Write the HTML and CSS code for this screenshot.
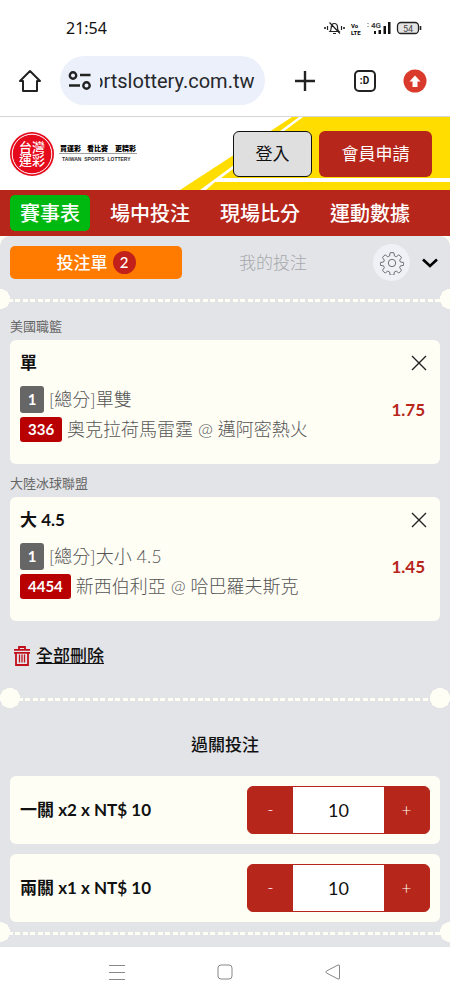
FILE: index.html
```html
<!DOCTYPE html>
<html lang="zh-Hant">
<head>
<meta charset="utf-8">
<meta name="viewport" content="width=device-width, initial-scale=1">
<title>台灣運彩 投注單</title>
<link rel="stylesheet" href="styles.css">
</head>
<body>
<div class="status-bar">
  <span class="clock">21:54</span>
  <svg class="status-icons" width="100" height="16" viewBox="0 0 100 16" aria-hidden="true">
    <g fill="none" stroke="#222" stroke-width="1.2">
      <path d="M8 11.5c1-1 1.2-2 1.2-4 0-2.500 1.300-4 3.100-4s3.200 1.500 3.200 4c0 2 .4 3 1.500 4zM11 13.500h3M7.500 2.500l10.500 11"/>
      <path d="M5.500 6v4M19.500 6v4"/>
      <path d="M3 7v2M22 7v2" stroke-width="1.600"/>
    </g>
    <text class="volte" x="29" y="8">Vo</text>
    <text class="volte" x="29" y="15">LTE</text>
    <path d="M46 3v1M46 6v1" stroke="#999" stroke-width="1.500"/>
    <text class="network" x="49" y="8">4G</text>
    <g fill="#111">
      <rect x="52" y="11" width="2" height="3"/><rect x="56.500" y="10" width="2.500" height="4"/>
      <rect x="61.500" y="6" width="2.500" height="8"/><rect x="66" y="2" width="2.500" height="12"/>
    </g>
    <rect x="75.500" y="2.500" width="21" height="11" rx="3.500" fill="#e4e4e4" stroke="#222" stroke-width="1.300"/>
    <path d="M98.500 6v4" stroke="#222" stroke-width="1.600"/>
    <text class="battery" x="86" y="11.500" text-anchor="middle">54</text>
  </svg>
</div>

<div class="browser-bar">
  <button class="icon-button" type="button" aria-label="首頁">
    <svg width="24" height="24" viewBox="0 0 24 24" fill="none" stroke="#222" stroke-width="2" stroke-linejoin="round"><path d="M12 2 2 12h3v10h14V12h3z"/></svg>
  </button>
  <button class="address" type="button">
    <svg width="24" height="24" viewBox="0 0 24 24" fill="none" stroke="#222" stroke-width="2.400"><circle cx="5" cy="6.500" r="3.200"/><path d="M12 6h10.500M1 16.500h11"/><circle cx="18.500" cy="16.500" r="3.200"/></svg>
    <span class="address-text">sportslottery.com.tw</span>
  </button>
  <button class="icon-button" type="button" aria-label="新分頁">
    <svg width="22" height="22" viewBox="0 0 22 22" stroke="#222" stroke-width="2.400"><path d="M11 1v20M1 11h20"/></svg>
  </button>
  <button class="tab-count" type="button">:D</button>
  <button class="icon-button" type="button" aria-label="更新">
    <svg width="24" height="24" viewBox="0 0 24 24"><circle cx="12" cy="12" r="11.500" fill="#d93a2b"/><path d="M12 6.500 6.500 12.500h3V18h5v-5.500h3z" fill="#fff"/></svg>
  </button>
</div>

<header class="site-header">
  <svg class="header-art" viewBox="0 0 270 73" preserveAspectRatio="xMaxYMax meet" aria-hidden="true">
    <path d="M112 0H270V73H0z" fill="#ffdd00"/>
    <path d="M119 0h4L41 61H270v4H35l-9 8h-6z" fill="#fff"/>
  </svg>
  <a class="brand" href="#" aria-label="台灣運彩">
    <svg width="128" height="44" viewBox="0 0 128 44">
      <circle cx="22" cy="22" r="22" fill="#e60b1c"/>
      <circle cx="22" cy="22" r="19.800" fill="none" stroke="#fff" stroke-width="1"/>
      <text class="seal" x="9" y="20">台灣</text>
      <text class="seal" x="9" y="33">運彩</text>
      <text class="slogan" x="50" y="19">買運彩</text>
      <text class="slogan" x="77" y="19">看比賽</text>
      <text class="slogan" x="105" y="19">更精彩</text>
      <path d="M49 21.500h78" stroke="#777" stroke-width=".7"/>
      <text class="tagline" x="52" y="29">TAIWAN  SPORTS  LOTTERY</text>
    </svg>
  </a>
  <div class="account">
    <button class="login" type="button">登入</button>
    <button class="signup" type="button">會員申請</button>
  </div>
</header>

<nav class="main-nav">
  <a class="active" href="#">賽事表</a>
  <a href="#">場中投注</a>
  <a href="#">現場比分</a>
  <a href="#">運動數據</a>
</nav>

<main class="betslip-wrap">
  <div class="betslip">
    <div class="slip-tabs">
      <button class="slip-tab selected" type="button">投注單 <span class="count">2</span></button>
      <button class="slip-tab" type="button">我的投注</button>
      <button class="settings" type="button" aria-label="設定">
        <svg width="24" height="24" viewBox="0 0 26 26" fill="none" stroke="#666" stroke-width="1" stroke-linejoin="round"><circle cx="13" cy="13" r="4"/><path d="M10.900 2q2.100-.7 4.200 0l.5 3.300 2 .9 2.700-2q2 1 3 3l-2 2.700.8 2 3.300.5q.4 1.600 0 3.200l-3.300.5-.8 2 2 2.700q-1 2-3 3l-2.700-2-2 .9-.5 3.300q-2.100.5-4.200 0l-.5-3.300-2-.9-2.700 2q-2-1-3-3l2-2.700-.8-2-3.300-.5q-.4-1.600 0-3.200l3.300-.5.8-2-2-2.700q1-2 3-3l2.700 2 2-.9z"/></svg>
      </button>
      <button class="icon-button" type="button" aria-label="收合">
        <svg width="18" height="12" viewBox="0 0 18 12" fill="none" stroke="#000" stroke-width="2.600"><path d="m2 2.500 7 6.500 7-6.500"/></svg>
      </button>
    </div>

    <div class="perforation"></div>

    <section class="bets">
      <h2 class="league">美國職籃</h2>
      <article class="bet">
        <div class="bet-head">
          <h3>單</h3>
          <button class="icon-button" type="button" aria-label="移除"><svg width="16" height="16" viewBox="0 0 16 16" stroke="#222" stroke-width="1.400"><path d="m1 1 14 14M15 1 1 15"/></svg></button>
        </div>
        <div class="bet-body">
          <div class="bet-lines">
            <p><span class="tag gray">1</span>[總分]單雙</p>
            <p><span class="tag red">336</span>奧克拉荷馬雷霆 @ 邁阿密熱火</p>
          </div>
          <strong class="odds">1.75</strong>
        </div>
      </article>
      <h2 class="league">大陸冰球聯盟</h2>
      <article class="bet">
        <div class="bet-head">
          <h3>大 4.5</h3>
          <button class="icon-button" type="button" aria-label="移除"><svg width="16" height="16" viewBox="0 0 16 16" stroke="#222" stroke-width="1.400"><path d="m1 1 14 14M15 1 1 15"/></svg></button>
        </div>
        <div class="bet-body">
          <div class="bet-lines">
            <p><span class="tag gray">1</span>[總分]大小 4.5</p>
            <p><span class="tag red">4454</span>新西伯利亞 @ 哈巴羅夫斯克</p>
          </div>
          <strong class="odds">1.45</strong>
        </div>
      </article>
      <a class="clear-all" href="#">
        <svg width="16" height="20" viewBox="0 0 16 20" fill="none" stroke="#c0101c" stroke-width="1.800"><path d="M0 3.800h16M5 3.500V1h6v2.500M0 6.800h16M2 7v12h12V7"/><path d="M5.500 8.500v8M8 8.500v8M10.500 8.500v8" stroke-width="1.300"/></svg>
        <span>全部刪除</span>
      </a>
    </section>

    <div class="perforation inset"></div>

    <section class="parlay">
      <h2>過關投注</h2>
      <div class="stake">
        <label for="single">一關 x2 x NT$ 10</label>
        <div class="stepper"><button type="button" aria-label="減少">-</button><input id="single" type="text" inputmode="numeric" value="10"><button type="button" aria-label="增加">+</button></div>
      </div>
      <div class="stake">
        <label for="double">兩關 x1 x NT$ 10</label>
        <div class="stepper"><button type="button" aria-label="減少">-</button><input id="double" type="text" inputmode="numeric" value="10"><button type="button" aria-label="增加">+</button></div>
      </div>
    </section>

    <div class="perforation"></div>
  </div>
</main>

<div class="system-nav">
  <button class="icon-button" type="button" aria-label="選單"><svg width="16" height="16" viewBox="0 0 16 16" stroke="#888" stroke-width="1"><path d="M0 1.500h16M0 8.500h16M0 15.500h16"/></svg></button>
  <button class="icon-button" type="button" aria-label="主畫面"><svg width="16" height="16" viewBox="0 0 16 16" fill="none" stroke="#888"><rect x="1" y="1" width="14" height="14" rx="3"/></svg></button>
  <button class="icon-button" type="button" aria-label="返回"><svg width="16" height="16" viewBox="0 0 16 16" fill="none" stroke="#888" stroke-linejoin="round"><path d="M1.500 7 13 1q1.500-.5 1.500 1v12q0 1.500-1.500 1L1.500 9q-1.500-1 0-2z"/></svg></button>
</div>
</body>
</html>
```
FILE: styles.css
```css
* { box-sizing: border-box; }

body {
  margin: 0;
  background: #fff;
  color: #111;
  font-family: Lato, "Noto Sans CJK TC", sans-serif;
  font-size: 17px;
  line-height: 24px;
}

h2, h3, p { margin: 0; }

button, input { font: inherit; color: inherit; }

button {
  padding: 0;
  border: 0;
  background: none;
  cursor: pointer;
}

svg { display: block; flex: none; }

.icon-button {
  display: flex;
  align-items: center;
  justify-content: center;
}

/* Phone status bar */
.status-bar {
  display: flex;
  align-items: center;
  justify-content: space-between;
  height: 56px;
  padding: 0 28px 0 66px;
}

.clock { font: 16px "Noto Sans", sans-serif; }
.volte { font: 700 6px Roboto, sans-serif; }
.network { font: 700 8px Roboto, sans-serif; fill: #444; }
.battery { font: 9px Roboto, sans-serif; fill: #444; }

/* Browser toolbar */
.browser-bar {
  display: flex;
  align-items: center;
  justify-content: space-between;
  padding: 0 23px 11px 18px;
  border-bottom: 1px solid #d5d5d5;
}

.address {
  display: flex;
  align-items: center;
  gap: 8px;
  flex: 1;
  max-width: 205px;
  height: 49px;
  margin: 0 12px 0 0;
  padding: 0 10px 0 8px;
  border-radius: 25px;
  background: #ebf0fa;
  color: #26282c;
  font: 20px Roboto, sans-serif;
}

.address-text {
  display: flex;
  flex: 1;
  justify-content: flex-end;
  min-width: 0;
  overflow: hidden;
}

.tab-count {
  width: 22px;
  height: 22px;
  margin-left: 20px;
  margin-right: 10px;
  border: 2px solid #222;
  border-radius: 5px;
  font: 700 10px Roboto, sans-serif;
}

/* Site header */
.site-header {
  position: relative;
  display: flex;
  align-items: center;
  justify-content: space-between;
  height: 73px;
  padding: 0 18px 0 10px;
}

.header-art {
  position: absolute;
  right: 0;
  bottom: 0;
  height: 100%;
}

.brand, .account { position: relative; }

.seal { font: 500 13px "Noto Sans CJK TC", sans-serif; fill: #fff; }
.slogan { font: 900 7px "Noto Sans CJK TC", sans-serif; }
.tagline { font: 700 5px "Liberation Sans", sans-serif; fill: #333; white-space: pre; }

.account { display: flex; gap: 7px; }

.login, .signup {
  height: 46px;
  border-radius: 6px;
}

.login {
  width: 79px;
  border: 1px solid #111;
  background: #dfdfdf;
}

.signup {
  width: 113px;
  background: #b7261b;
  color: #fff;
}

.main-nav {
  display: flex;
  gap: 10px;
  padding: 5px 10px;
  background: #b7261b;
}

.main-nav a {
  padding: 0 10px;
  border-radius: 5px;
  color: #fff;
  font-size: 20px;
  font-weight: 500;
  line-height: 36px;
  text-decoration: none;
  white-space: nowrap;
}

.main-nav .active { background: #00b910; }

/* Bet slip */
.betslip-wrap { background: #fffef5; }

.betslip {
  padding: 8px 0 5px;
  border-radius: 10px 10px 0 0;
  background: #e3e4e8;
}

.slip-tabs {
  display: flex;
  align-items: center;
  padding: 0 11px 0 10px;
}

.slip-tab {
  display: flex;
  align-items: center;
  justify-content: center;
  gap: 5px;
  flex: 1;
  height: 33px;
  border-radius: 5px;
  color: #a6a8ac;
  font-weight: 300;
}

.slip-tab + .slip-tab { margin: 0 14px 0 5px; }

.slip-tab.selected {
  background: #ff7b00;
  color: #fff;
  font-weight: 500;
}

.count {
  width: 23px;
  border-radius: 50%;
  background: #c2201a;
  font-size: 15px;
  line-height: 23px;
}

.settings {
  display: flex;
  align-items: center;
  justify-content: center;
  width: 37px;
  height: 37px;
  margin-right: 11px;
  border-radius: 50%;
  background: #eff1f7;
}

/* Ticket edge: a dashed line between two punched holes */
.perforation {
  height: 20px;
  background:
    radial-gradient(circle at 0 50%, #fffef5 10px, transparent 10px),
    radial-gradient(circle at 100% 50%, #fffef5 10px, transparent 10px),
    repeating-linear-gradient(90deg, #fffef5 0 5px, transparent 5px 8px, #fffef5 8px 13px, transparent 13px 15px) 0 10px / 100% 3px no-repeat;
}

.perforation.inset {
  background:
    radial-gradient(circle at 10px 50%, #fffef5 10px, transparent 10px),
    radial-gradient(circle at calc(100% - 10px) 50%, #fffef5 10px, transparent 10px),
    repeating-linear-gradient(90deg, #fffef5 0 5px, transparent 5px 8px, #fffef5 8px 13px, transparent 13px 15px) 10px 10px / calc(100% - 20px) 3px no-repeat;
}

.slip-tabs + .perforation { margin-top: 8px; }

.bets { padding: 8px 10px 16px; }

.league {
  padding: 1px 0 5px;
  color: #666;
  font-size: 13px;
  font-weight: 400;
  line-height: 17px;
}

.bet {
  margin-bottom: 10px;
  padding: 11px 11px 20px 10px;
  border-radius: 6px;
  background: #fffef5;
}

.bet-head, .bet-body, .stake {
  display: flex;
  align-items: center;
  justify-content: space-between;
}

.bet-head { margin-bottom: 9px; }

.bet-head h3 {
  font-size: 17px;
  font-weight: 700;
}

.bet-head .icon-button { padding: 2px; }

.bet-lines {
  color: #555;
  font-size: 18px;
  font-weight: 300;
}

.bet-lines p {
  display: flex;
  align-items: center;
  gap: 5px;
  height: 30px;
}

.tag {
  border-radius: 3px;
  color: #fff;
  font-size: 15px;
  font-weight: 700;
  text-align: center;
}

.tag.gray {
  width: 24px;
  background: #666;
  line-height: 27px;
}

.tag.red {
  padding: 0 8px;
  background: #b80000;
  line-height: 25px;
}

.odds {
  padding: 0 4px 8px 0;
  color: #b7261b;
  font-size: 17px;
}

.clear-all {
  display: inline-flex;
  align-items: center;
  gap: 6px;
  margin-top: 13px;
  padding-left: 4px;
  color: #111;
  font-weight: 500;
}

.parlay {
  display: grid;
  gap: 10px;
  padding: 0 10px;
}

.parlay h2 {
  padding: 25px 0 9px;
  font-size: 17px;
  font-weight: 500;
  text-align: center;
}

.stake {
  padding: 10px;
  border-radius: 6px;
  background: #fffef5;
  font-weight: 700;
}

.stepper {
  display: flex;
  width: 183px;
  height: 48px;
  overflow: hidden;
  border: 1px solid #b7261b;
  border-radius: 6px;
  background: #b7261b;
  font-weight: 400;
}

.stepper button {
  width: 45px;
  color: #fff;
  font-weight: 300;
}

.stepper input {
  flex: 1;
  min-width: 0;
  padding: 0;
  border: 0;
  background: #fff;
  font-size: 18px;
  text-align: center;
}

/* Phone navigation buttons */
.system-nav {
  display: flex;
  justify-content: center;
  gap: 92px;
  padding: 17px 0 20px;
}
```
